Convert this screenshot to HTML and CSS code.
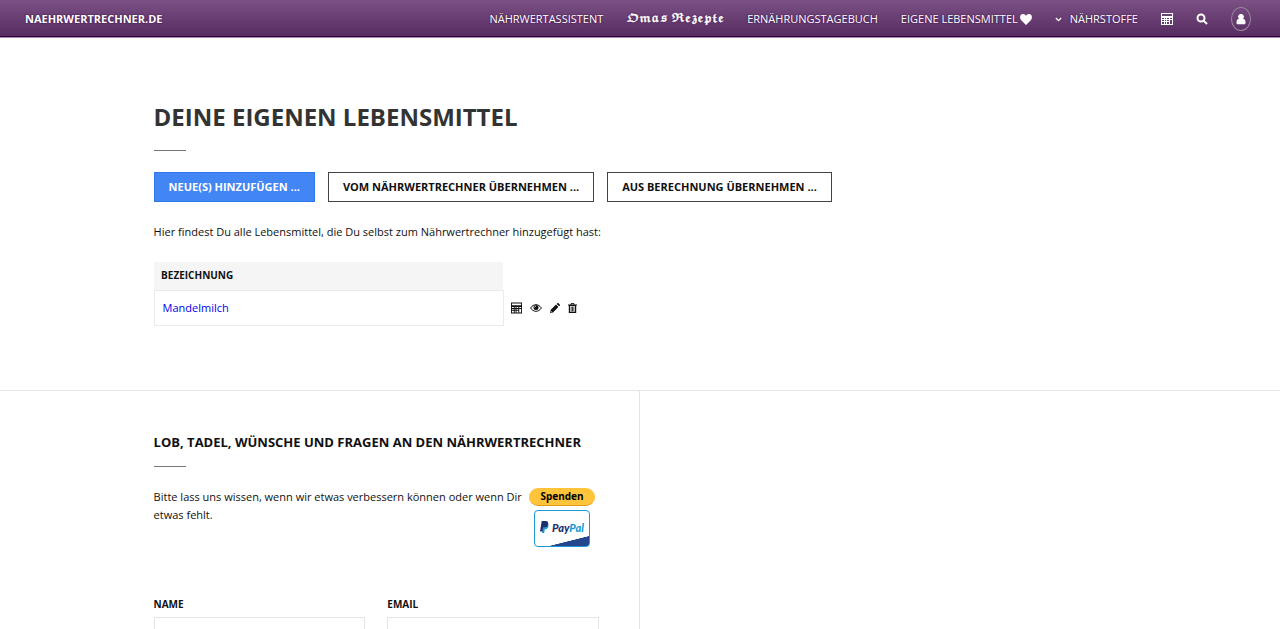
FILE: index.html
```
<!DOCTYPE html>
<html lang="de">
<head>
<meta charset="utf-8">
<meta name="viewport" content="width=device-width, initial-scale=1">
<title>Deine eigenen Lebensmittel</title>
<link rel="stylesheet" href="styles.css">
</head>
<body>
<svg class="defs" aria-hidden="true">
  <symbol id="calc" viewBox="0 0 12 12"><path fill-rule="evenodd" d="M0 0h12v12H0zM1 1v2h10V1zM1 5v1h2V5zm3 0v1h1V5zm2 0v1h2V5zm3 0v1h2V5zM1 7v1h2V7zm3 0v1h1V7zm2 0v1h2V7zM1 9v2h2V9zm3 0v2h1V9zm2 0v2h2V9zm3-2v4h2V7z"/></symbol>
</svg>
<header class="topbar">
  <a class="brand" href="#">NAEHRWERTRECHNER.DE</a>
  <nav class="nav">
    <a href="#">NÄHRWERTASSISTENT</a>
    <a class="fraktur" href="#" aria-label="Omas Rezepte">𝕺𝖒𝖆𝖘 𝕽𝖊𝖟𝖊𝖕𝖙𝖊</a>
    <a href="#">ERNÄHRUNGSTAGEBUCH</a>
    <a class="own" href="#">EIGENE LEBENSMITTEL<svg class="heart" viewBox="0 0 12 11"><path d="M6 11 1 6C-.6 4.200-.2 0 3 0c1.500 0 2.500 1 3 1.800C6.500 1 7.500 0 9 0c3.200 0 3.600 4.200 2 6z"/></svg></a>
    <a class="sub" href="#"><svg class="chevron" viewBox="0 0 8 5"><path d="M1 .8 4 3.800 7 .8"/></svg>NÄHRSTOFFE</a>
    <a class="tool" href="#" aria-label="Rechner"><svg class="i12"><use href="#calc"/></svg></a>
    <a class="tool" href="#" aria-label="Suche"><svg class="i12" viewBox="0 0 12 12"><path fill="none" stroke="currentColor" stroke-width="2" d="M8.500 5A3.500 3.500 0 1 1 1.500 5a3.500 3.500 0 0 1 7 0zM7.600 7.600 11 11"/></svg></a>
    <a class="user" href="#" aria-label="Konto"><svg class="person" viewBox="0 0 10 11"><path d="M5 0a2.700 2.700 0 0 1 2 4.700C9.300 5 9.500 7 9.500 9c0 .8-.5 1.300-1.300 1.300H1.800C1 10.300.5 9.800.5 9c0-2 .2-4 2.500-4.300A2.700 2.700 0 0 1 5 0z"/></svg></a>
  </nav>
</header>
<main class="main">
  <h1>DEINE EIGENEN LEBENSMITTEL</h1>
  <div class="rule"></div>
  <div class="actions">
    <button class="btn primary" type="button">NEUE(S) HINZUFÜGEN ...</button>
    <button class="btn" type="button">VOM NÄHRWERTRECHNER ÜBERNEHMEN ...</button>
    <button class="btn" type="button">AUS BERECHNUNG ÜBERNEHMEN ...</button>
  </div>
  <p class="intro">Hier findest Du alle Lebensmittel, die Du selbst zum Nährwertrechner hinzugefügt hast:</p>
  <table class="foods">
    <thead><tr><th class="name" scope="col">BEZEICHNUNG</th><td></td></tr></thead>
    <tbody><tr>
      <td class="name"><a href="#">Mandelmilch</a></td>
      <td><div class="tools">
        <button type="button" aria-label="Berechnen"><svg class="i11"><use href="#calc"/></svg></button>
        <button type="button" aria-label="Ansehen"><svg class="eye" viewBox="0 0 12 8"><path fill="none" stroke="currentColor" d="M.6 4C3.400-.4 8.600-.4 11.400 4 8.600 8.400 3.400 8.400.6 4z"/><circle cx="6" cy="3.600" r="2.500"/><path fill="none" stroke="#fff" stroke-width=".7" d="M4.600 3.500A1.400 1.400 0 0 1 6 2.100"/></svg></button>
        <button type="button" aria-label="Bearbeiten"><svg class="i10" viewBox="0 0 10 10"><path d="M0 10 .6 7 6 1.600 8.400 4 3 9.400zM6.700.9 7.300.3c.4-.4.8-.4 1.200 0l1.200 1.200c.4.400.4.800 0 1.200l-.6.600z"/><path fill="#fff" d="m.9 8 1.100 1.100-.8.200-.5-.5z"/></svg></button>
        <button type="button" aria-label="Löschen"><svg class="trash" viewBox="0 0 9 10"><path fill-rule="evenodd" d="M0 1.500h2.500L3 0h3l.5 1.500H9v1H8.200V10H.8V2.500H0zm3.500 0h2L5.300.8H3.700zM2 3v5.800h5V3z"/><path d="M2.700 3.500h.8v5h-.8zm1.400 0h.8v5h-.8zm1.400 0h.8v5h-.8z"/></svg></button>
      </div></td>
    </tr></tbody>
  </table>
</main>
<footer class="footer">
  <section class="feedback">
    <h2>LOB, TADEL, WÜNSCHE UND FRAGEN AN DEN NÄHRWERTRECHNER</h2>
    <div class="rule"></div>
    <div class="message">
      <p>Bitte lass uns wissen, wenn wir etwas verbessern können oder wenn Dir etwas fehlt.</p>
      <div class="donate">
        <button class="spenden" type="button">Spenden</button>
        <a class="paypal" href="#" aria-label="PayPal">
          <svg class="pp" viewBox="0 0 9 12"><path fill="#179bd7" d="M3.500 3h4.300c1 1 .9 2.500.3 3.600C7.400 8 6.200 8.300 4.800 8.300L4.200 12H2z"/><path fill="#1d2f6f" d="M1.700 0h4c2 0 2.900 1.300 2.500 3.200C7.800 5.500 6.300 6.300 4.300 6.300H3.200L2.500 10.500H0z"/></svg>
          <span class="pay">Pay<span class="pal">Pal</span></span>
        </a>
      </div>
    </div>
    <form class="form">
      <div><label for="name">NAME</label><input id="name" type="text"></div>
      <div><label for="email">EMAIL</label><input id="email" type="email"></div>
    </form>
  </section>
  <div class="aside"></div>
</footer>
</body>
</html>
```
FILE: styles.css
```
* { box-sizing: border-box; }
body {
  margin: 0;
  height: 100vh;
  overflow: hidden;
  display: flex;
  flex-direction: column;
  background: #fff;
  color: #111;
  font: 11px/18px "Open Sans", sans-serif;
}
svg { display: block; fill: currentColor; }
h1, h2, p { margin: 0; }
button { font: inherit; color: inherit; cursor: pointer; }
.defs { position: absolute; width: 0; height: 0; }
.topbar {
  flex: none;
  display: flex;
  align-items: center;
  justify-content: space-between;
  height: 38px;
  padding: 1px 29px 0 25px;
  background: linear-gradient(#7b5085, #562b60);
  border-bottom: 1px solid #a78bb0;
  box-shadow: inset 0 -1px #35003f;
}
.topbar a {
  color: #fff;
  text-decoration: none;
  text-shadow: 0 0 2px #35003f;
}
.brand { font-weight: 700; }
.nav { display: flex; align-items: center; gap: 23px; white-space: nowrap; }
.nav .fraktur { font: 11px/18px "DejaVu Math TeX Gyre", "DejaVu Sans", serif; -webkit-text-stroke: 0.3px #fff; }
.own, .sub { display: flex; align-items: center; }
.own { gap: 2px; }
.sub { gap: 8px; }
.heart { width: 12px; height: 11px; }
.chevron { width: 7px; height: 5px; fill: none; stroke: #fff; stroke-width: 1.5; }
.i12 { width: 12px; height: 12px; }
.user {
  display: grid;
  place-items: center;
  width: 20px;
  height: 24px;
  border: 1px solid #998a9c;
  border-radius: 50%;
}
.person { width: 10px; height: 11px; }
.main { flex: none; padding: 61px 12% 64px; border-bottom: 1px solid #e6e6e6; }
h1 { font-size: 24px; line-height: 36px; color: #333; }
.rule { width: 32px; height: 1px; background: #777; }
.main .rule { margin: 15px 0 21px; }
.actions { display: flex; flex-wrap: wrap; gap: 13px; }
.btn {
  height: 30px;
  padding: 0 14px;
  background: #fff;
  border: 1px solid #444;
  font-weight: 700;
}
.primary { background: #4285f4; border-color: #3079ed; color: #fff; }
.intro { margin: 21px 0; }
.foods { border-collapse: collapse; }
.foods td, .foods th { padding: 0; }
.foods .name { width: 349px; text-align: left; }
.foods th.name { height: 28px; padding: 0 7px 2px; background: #f5f5f5; font-size: 10px; }
.foods td.name { height: 35px; padding: 0 8px; border: 1px solid #ebebeb; }
.foods a { color: #00e; text-decoration: none; }
.tools { display: flex; align-items: center; gap: 8px; padding-left: 7px; }
.tools button { padding: 0; border: 0; background: none; }
.i11 { width: 11px; height: 12px; }
.eye { width: 12px; height: 8px; }
.i10 { width: 10px; height: 10px; }
.trash { width: 9px; height: 10px; }
.footer { flex: 1 0 auto; display: grid; grid-template-columns: 1fr 1fr; }
.feedback { padding: 41px 40px 0 24%; border-right: 1px solid #e6e6e6; }
h2 { font-size: 13px; line-height: 20px; white-space: nowrap; }
.feedback .rule { margin: 14px 0 21px; }
.message { display: flex; align-items: flex-start; min-height: 107px; }
.message p { flex: 1; }
.donate { flex: none; width: 74px; display: flex; flex-direction: column; align-items: center; gap: 4px; }
.spenden {
  width: 66px;
  height: 18px;
  padding: 0;
  border: 0;
  border-bottom: 1px solid #dd9a1f;
  border-radius: 9px;
  background: #ffc439;
  color: #000;
  font: 700 10px/16px "Noto Sans", sans-serif;
}
.paypal {
  display: flex;
  align-items: flex-start;
  justify-content: center;
  gap: 3px;
  width: 56px;
  height: 37px;
  padding-top: 10px;
  border: 1px solid #1b9ad6;
  border-radius: 4px;
  background: linear-gradient(166deg, transparent 79%, #24468c 80%);
  color: #1d2f6f;
  text-decoration: none;
}
.pp { width: 9px; height: 12px; }
.pay { font: italic 900 11px/13px "Lato", sans-serif; }
.pal { color: #179bd7; }
.form { display: grid; grid-template-columns: 1fr 1fr; gap: 22px; }
.form label { display: block; font-size: 10px; font-weight: 700; line-height: 18px; margin-bottom: 4px; }
.form input { width: 100%; height: 32px; border: 1px solid #e4e4e4; background: #fff; }
```
